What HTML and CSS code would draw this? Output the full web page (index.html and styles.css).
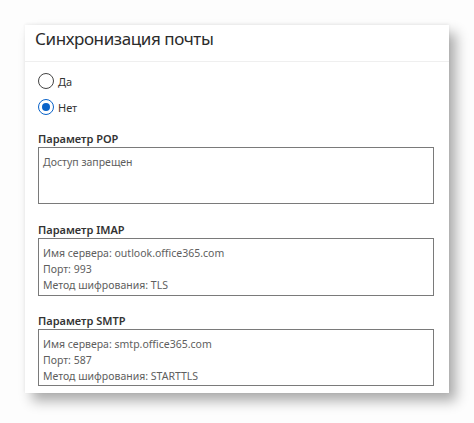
FILE: index.html
```html
<!DOCTYPE html>
<html lang="ru">
<head>
<meta charset="utf-8">
<title>Синхронизация почты</title>
<link rel="stylesheet" href="styles.css">
</head>
<body>
<div class="page">
  <section class="card">
    <header class="card-header">
      <h1 class="title">Синхронизация почты</h1>
    </header>
    <div class="card-body">
      <div class="radios">
        <label class="radio"><span class="dot"></span><span class="radio-text">Да</span></label>
        <label class="radio checked"><span class="dot"></span><span class="radio-text">Нет</span></label>
      </div>
      <div class="field field-first">
        <div class="field-label">Параметр POP</div>
        <div class="box box-pop">
          <div>Доступ запрещен</div>
        </div>
      </div>
      <div class="field">
        <div class="field-label">Параметр IMAP</div>
        <div class="box">
          <div>Имя сервера: outlook.office365.com</div>
          <div>Порт: 993</div>
          <div>Метод шифрования: TLS</div>
        </div>
      </div>
      <div class="field field-last">
        <div class="field-label">Параметр SMTP</div>
        <div class="box box-smtp">
          <div>Имя сервера: smtp.office365.com</div>
          <div>Порт: 587</div>
          <div>Метод шифрования: STARTTLS</div>
        </div>
      </div>
    </div>
  </section>
</div>
</body>
</html>
```
FILE: styles.css
```css
html, body {
  margin: 0;
  padding: 0;
  background: #fdfdfd;
  font-family: "Noto Sans", "Open Sans", sans-serif;
}
.page {
  width: 474px;
  height: 423px;
  padding: 25px 0 0 25px;
  box-sizing: border-box;
}
.card {
  width: 424px;
  height: 368px;
  background: #fff;
  box-shadow: 0 -1px 3px rgba(0,0,0,0.06), 7px 8px 12px rgba(0,0,0,0.32);
  box-sizing: border-box;
}
.card-header {
  height: 37px;
  border-bottom: 1px solid #efefef;
  padding: 3px 0 0 10px;
  box-sizing: border-box;
}
.title {
  margin: 0;
  font-size: 17px;
  line-height: 22px;
  font-weight: 400;
  color: #2b2b2b;
  letter-spacing: -0.4px;
}
.card-body {
  padding: 11px 15px 0 13px;
}
.radios {
  display: flex;
  flex-direction: column;
  gap: 10px;
}
.radio {
  display: flex;
  align-items: center;
  gap: 4px;
  height: 16px;
  font-size: 11px;
  color: #333;
}
.dot {
  width: 14px;
  height: 14px;
  border: 1px solid #444;
  border-radius: 50%;
  box-sizing: content-box;
  display: flex;
  align-items: center;
  justify-content: center;
}
.radio.checked .dot {
  border-color: #0a63c9;
}
.radio.checked .dot::after {
  content: "";
  width: 8px;
  height: 8px;
  border-radius: 50%;
  background: #0a63c9;
}
.field {
  margin-top: 19px;
}
.field-first {
  margin-top: 17px;
}
.field-last {
  margin-top: 18px;
}
.field-label {
  font-size: 11px;
  font-weight: 600;
  color: #333;
  line-height: 14px;
  height: 14px;
  margin-bottom: 1px;
}
.box {
  border: 1px solid #7a7a7a;
  height: 58px;
  box-sizing: border-box;
  padding: 6px 4px;
  font-size: 10.5px;
  line-height: 16px;
  color: #5e5e5e;
}
.box-pop {
  height: 57px;
}
.box-smtp {
  height: 57px;
}
```
